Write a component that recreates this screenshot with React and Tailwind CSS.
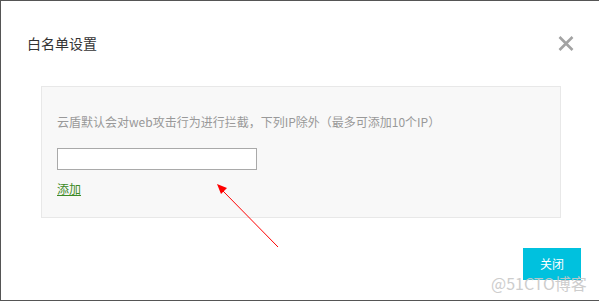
import React from "react";

export default function App() {
  return (
    <div
      className="relative w-[599px] h-[301px] box-border border-t border-l border-b border-[#555555] bg-white flex flex-col overflow-hidden"
      style={{ fontFamily: '"Noto Sans CJK SC", "Noto Sans", sans-serif' }}
    >
      <div className="flex items-center justify-between pl-[26px] pr-[25px] pt-[32px]">
        <div className="text-[14px] leading-[20px] text-[#333333]">白名单设置</div>
        <button className="w-[16px] h-[16px] flex items-center justify-center">
          <svg width="16" height="15" viewBox="0 0 16 15">
            <path d="M1.5 1 L14.5 14 M14.5 1 L1.5 14" stroke="#a3a3a3" strokeWidth="2.6" />
          </svg>
        </button>
      </div>

      <div className="ml-[40px] mt-[33px] w-[520px] h-[132px] box-border border border-[#e8e8e8] bg-[#f8f8f8] pl-[15px] pt-[26px]">
        <div className="text-[12px] leading-[18px] text-[#999999] whitespace-nowrap">
          云盾默认会对web攻击行为进行拦截，下列IP除外（最多可添加10个IP）
        </div>
        <input
          type="text"
          className="block mt-[17px] w-[200px] h-[22px] box-border border border-[#a9a9a9] bg-white outline-none"
        />
        <a href="#" className="inline-block mt-[10px] text-[12px] leading-[18px] text-[#3d8a26] underline">
          添加
        </a>
      </div>

      <div className="flex justify-end mt-[30px] pr-[18px]">
        <button className="w-[58px] h-[32px] bg-[#00c1de] text-white text-[12px] leading-[32px]">关闭</button>
      </div>

      <div className="absolute left-[490px] top-[273px] text-[16px] leading-[18px] text-[#c8c8c8] opacity-90 whitespace-nowrap">
        @51CTO博客
      </div>

      <svg className="absolute left-0 top-0 pointer-events-none" width="599" height="301">
        <line x1="277" y1="246" x2="222" y2="190" stroke="#ff0000" strokeWidth="1" />
        <polygon points="216,183 226,187 220,193" fill="#ff0000" />
      </svg>
    </div>
  );
}
